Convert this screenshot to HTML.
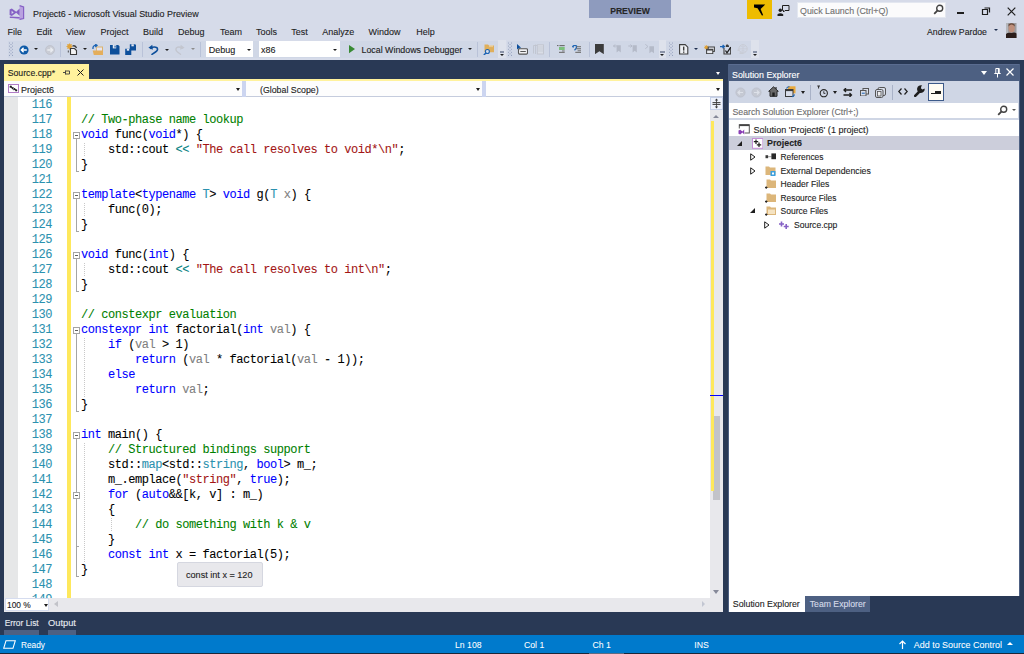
<!DOCTYPE html><html><head><meta charset="utf-8"><style>
*{margin:0;padding:0;box-sizing:border-box}
html,body{width:1024px;height:654px;overflow:hidden;background:#293955;font-family:"Liberation Sans",sans-serif;font-size:9px;color:#1E1E1E}
.a{position:absolute}
.t{position:absolute;white-space:pre;line-height:12px;height:12px;-webkit-text-stroke:0.12px currentColor}
.menu span{position:absolute;top:25.5px;line-height:12px;font-size:9px;-webkit-text-stroke:0.1px currentColor}
.sep{position:absolute;width:1px;top:42px;height:15px;background:#B9C2D8}
.dd{position:absolute;width:0;height:0;border-left:2.5px solid transparent;border-right:2.5px solid transparent;border-top:3px solid #1E1E1E}
.grip{position:absolute;top:42px;width:4px;height:14px;background-image:radial-gradient(circle,#99A4BF 0.75px,transparent 0.9px);background-size:2px 2px}
.code{font-family:"Liberation Mono",monospace;font-size:12px;letter-spacing:-0.45px;-webkit-text-stroke:0.08px currentColor}
.ln{position:absolute;left:18px;width:34px;text-align:right;color:#2B91AF;white-space:pre;height:15px;line-height:15px}
.cl{position:absolute;left:81px;white-space:pre;height:15px;line-height:15px;color:#000}
.k{color:#0000FF}.c{color:#008000}.s{color:#A31515}.ty{color:#2B91AF}.p{color:#808080}.op{color:#008080}
.tree{position:absolute;white-space:pre;line-height:13px;height:13px;font-size:9px;-webkit-text-stroke:0.12px currentColor}
</style></head><body>
<div class="a" style="left:0px;top:0px;width:1024px;height:60px;background:#D6DBE9;"></div>
<svg class="a" style="left:9px;top:5px" width="16" height="15" viewBox="0 0 16 15"><path d="M10.6 0.6 L14.6 2 V13.6 L10.6 14.4 L0.8 12.2 L10.6 12.4 Z" fill="#B9A2E0"/><path d="M10.6 0.6 L14.6 2 V13.6 L10.6 14.4" fill="none" stroke="#8661C5" stroke-width="1.2"/><path d="M0.8 12.2 L10.6 12.6" stroke="#8661C5" stroke-width="1.4"/><path d="M0.6 4.4 L2.8 3.5 L7.2 6.8 L10.6 3.6 V10.8 L7.2 7.8 L2.8 11 L0.6 10.1 Z M2.6 5.8 V9 L4.7 7.4 Z" fill="#8661C5" fill-rule="evenodd"/></svg>
<div class="t" style="left:33px;top:7.5px;font-size:8.95px">Project6 - Microsoft Visual Studio Preview</div>
<div class="a" style="left:589px;top:0px;width:82px;height:18px;background:#8E9BBE;"></div>
<div class="t" style="left:589px;top:5px;width:82px;text-align:center;font-weight:bold;font-size:8.6px;color:#262626;transform:scaleY(1.12)">PREVIEW</div>
<div class="a" style="left:747px;top:0px;width:25px;height:19px;background:#EEBC00;"></div>
<svg class="a" style="left:753px;top:4px" width="13" height="12" viewBox="0 0 13 12"><path d="M1 0.6 H12.2 L7.6 5 L10.2 11.3 L8.9 11.6 L4.6 4.2 L1 3.6 Z" fill="#000"/></svg>
<svg class="a" style="left:777px;top:4px" width="13" height="12" viewBox="0 0 13 12"><path d="M5.5 1.5 H12 V6.5 H8 L6.5 8 V6.5 H5.5 Z" fill="none" stroke="#1E1E1E" stroke-width="1"/><circle cx="3.3" cy="6.2" r="1.7" fill="#1E1E1E"/><path d="M0.5 12 V10.3 Q3.3 8 6.2 10.3 V12Z" fill="#1E1E1E"/></svg>
<div class="a" style="left:797px;top:2px;width:149px;height:16px;background:#FBFBFC;border:1px solid #E3E7F0"></div>
<div class="t" style="left:800px;top:5px;color:#717171;font-size:8.85px">Quick Launch (Ctrl+Q)</div>
<svg class="a" style="left:933px;top:4px" width="11" height="11" viewBox="0 0 11 11"><circle cx="6.7" cy="4.3" r="3" fill="none" stroke="#424242" stroke-width="1.4"/><path d="M4.6 6.4 L1.2 9.8" stroke="#424242" stroke-width="1.8"/></svg>
<div class="a" style="left:957px;top:12px;width:7px;height:2px;background:#1E1E1E;"></div>
<svg class="a" style="left:981px;top:6px" width="10" height="10" viewBox="0 0 10 10"><path d="M3.5 2 H8.5 V6.5 M1.5 3.5 H6.5 V8.5 H1.5 Z" fill="none" stroke="#1E1E1E" stroke-width="1.2"/></svg>
<svg class="a" style="left:1007px;top:7px" width="9" height="9" viewBox="0 0 9 9"><path d="M0.7 0.7 L8.3 8.3 M8.3 0.7 L0.7 8.3" stroke="#1E1E1E" stroke-width="1.2"/></svg>
<div class="t" style="left:927px;top:26px;font-size:8.7px">Andrew Pardoe</div>
<div class="dd" style="left:993.5px;top:29px;border-left-width:2.2px;border-right-width:2.2px;border-top:2.8px solid #1E2E4E"></div>
<svg class="a" style="left:1006px;top:23px" width="10.5" height="15" viewBox="0 0 10.5 15"><rect width="10.5" height="15" fill="#9C9CA0"/><rect x="0" y="0" width="2" height="15" fill="#B5B7BC"/><ellipse cx="5.6" cy="5.2" rx="3.1" ry="4.2" fill="#BE8F7C"/><path d="M2.5 3.5 Q5.5 -0.5 8.7 3.5 V1.5 Q5.5 -1 2.5 1.5 Z" fill="#6A4A3A"/><path d="M0 15 V11 Q2 9 5.5 10 Q9 9 10.5 10.5 V15 Z" fill="#2A1C1A"/></svg>
<div class="menu">
<span style="left:7.5px">File</span>
<span style="left:36.5px">Edit</span>
<span style="left:66px">View</span>
<span style="left:100.5px">Project</span>
<span style="left:143px">Build</span>
<span style="left:178px">Debug</span>
<span style="left:220px">Team</span>
<span style="left:256px">Tools</span>
<span style="left:291.3px">Test</span>
<span style="left:322.3px">Analyze</span>
<span style="left:368.4px">Window</span>
<span style="left:416.2px">Help</span>
</div>
<div class="a" style="left:8px;top:40.5px;width:490px;height:17.5px;background:#D0D7E6;"></div>
<div class="a" style="left:506.5px;top:40.5px;width:152.5px;height:17.5px;background:#D0D7E6;"></div>
<div class="a" style="left:666.4px;top:40.5px;width:84.4px;height:17.5px;background:#D0D7E6;"></div>
<div class="a" style="left:497.7px;top:40px;width:8.8px;height:18px;background:#DEE2EC;"></div>
<div class="a" style="left:499.79999999999995px;top:51px;width:4.6px;height:1.5px;background:#8A93A8;"></div>
<div class="a" style="left:499.79999999999995px;top:53.8px;width:0;height:0;border-left:2.3px solid transparent;border-right:2.3px solid transparent;border-top:2.2px solid #1E1E1E"></div>
<div class="a" style="left:658.9px;top:40px;width:7.5px;height:18px;background:#DEE2EC;"></div>
<div class="a" style="left:660.35px;top:51px;width:4.6px;height:1.5px;background:#8A93A8;"></div>
<div class="a" style="left:660.35px;top:53.8px;width:0;height:0;border-left:2.3px solid transparent;border-right:2.3px solid transparent;border-top:2.2px solid #1E1E1E"></div>
<div class="a" style="left:750.8px;top:40px;width:8.7px;height:18px;background:#DEE2EC;"></div>
<div class="a" style="left:752.85px;top:51px;width:4.6px;height:1.5px;background:#8A93A8;"></div>
<div class="a" style="left:752.85px;top:53.8px;width:0;height:0;border-left:2.3px solid transparent;border-right:2.3px solid transparent;border-top:2.2px solid #1E1E1E"></div>
<svg class="a" style="left:8.5px;top:42px" width="4" height="14" viewBox="0 0 4 14"><g fill="#8D99B8"><circle cx="0.4" cy="1.0" r="0.55"/><circle cx="3.6" cy="1.0" r="0.55"/><circle cx="2.0" cy="2.549999999999997" r="0.55"/><circle cx="0.4" cy="4.100000000000001" r="0.55"/><circle cx="3.6" cy="4.100000000000001" r="0.55"/><circle cx="2.0" cy="5.649999999999999" r="0.55"/><circle cx="0.4" cy="7.200000000000003" r="0.55"/><circle cx="3.6" cy="7.200000000000003" r="0.55"/><circle cx="2.0" cy="8.75" r="0.55"/><circle cx="0.4" cy="10.299999999999997" r="0.55"/><circle cx="3.6" cy="10.299999999999997" r="0.55"/><circle cx="2.0" cy="11.850000000000001" r="0.55"/><circle cx="0.4" cy="13.399999999999999" r="0.55"/><circle cx="3.6" cy="13.399999999999999" r="0.55"/></g></svg>
<svg class="a" style="left:508px;top:42px" width="4" height="14" viewBox="0 0 4 14"><g fill="#8D99B8"><circle cx="0.4" cy="1.0" r="0.55"/><circle cx="3.6" cy="1.0" r="0.55"/><circle cx="2.0" cy="2.549999999999997" r="0.55"/><circle cx="0.4" cy="4.100000000000001" r="0.55"/><circle cx="3.6" cy="4.100000000000001" r="0.55"/><circle cx="2.0" cy="5.649999999999999" r="0.55"/><circle cx="0.4" cy="7.200000000000003" r="0.55"/><circle cx="3.6" cy="7.200000000000003" r="0.55"/><circle cx="2.0" cy="8.75" r="0.55"/><circle cx="0.4" cy="10.299999999999997" r="0.55"/><circle cx="3.6" cy="10.299999999999997" r="0.55"/><circle cx="2.0" cy="11.850000000000001" r="0.55"/><circle cx="0.4" cy="13.399999999999999" r="0.55"/><circle cx="3.6" cy="13.399999999999999" r="0.55"/></g></svg>
<svg class="a" style="left:669px;top:42px" width="4" height="14" viewBox="0 0 4 14"><g fill="#8D99B8"><circle cx="0.4" cy="1.0" r="0.55"/><circle cx="3.6" cy="1.0" r="0.55"/><circle cx="2.0" cy="2.549999999999997" r="0.55"/><circle cx="0.4" cy="4.100000000000001" r="0.55"/><circle cx="3.6" cy="4.100000000000001" r="0.55"/><circle cx="2.0" cy="5.649999999999999" r="0.55"/><circle cx="0.4" cy="7.200000000000003" r="0.55"/><circle cx="3.6" cy="7.200000000000003" r="0.55"/><circle cx="2.0" cy="8.75" r="0.55"/><circle cx="0.4" cy="10.299999999999997" r="0.55"/><circle cx="3.6" cy="10.299999999999997" r="0.55"/><circle cx="2.0" cy="11.850000000000001" r="0.55"/><circle cx="0.4" cy="13.399999999999999" r="0.55"/><circle cx="3.6" cy="13.399999999999999" r="0.55"/></g></svg>
<svg class="a" style="left:18.5px;top:44.5px" width="10" height="10" viewBox="0 0 10 10"><circle cx="5" cy="5" r="4.6" fill="#0E5AA7"/><path d="M2.3 5 H7.8 M4.6 2.7 L2.3 5 L4.6 7.3" fill="none" stroke="#fff" stroke-width="1.4"/></svg>
<div class="dd" style="left:34px;top:48px;border-left-width:2.2px;border-right-width:2.2px;border-top:2.4px solid #1E1E1E"></div>
<svg class="a" style="left:44.5px;top:44.5px" width="10" height="10" viewBox="0 0 10 10"><circle cx="5" cy="5" r="4.5" fill="#C9CCD5" stroke="#BEC2CC" stroke-width="0.8"/><path d="M2.3 5 H7.7 M5.4 2.7 L7.7 5 L5.4 7.3" fill="none" stroke="#E9EBF0" stroke-width="1.3"/></svg>
<div class="dd" style="left:190.9px;top:48.3px;border-left-width:2.1px;border-right-width:2.1px;border-top:2.3px solid #8C8C8C"></div>
<div class="sep" style="left:59.5px"></div>
<svg class="a" style="left:66px;top:43px" width="12" height="13" viewBox="0 0 12 13"><circle cx="3.5" cy="3.5" r="2.4" fill="#E0A43C"/><path d="M3.5 0.3 V6.7 M0.3 3.5 H6.7 M1.2 1.2 L5.8 5.8 M5.8 1.2 L1.2 5.8" stroke="#E0A43C" stroke-width="0.7"/><path d="M4.5 5.5 H8.5 L10.5 7.5 V11.5 H4.5 Z" fill="#F3F3F3" stroke="#3A3A3A" stroke-width="1.1"/><path d="M6.5 3 Q9.5 2 10.5 5" fill="none" stroke="#3A3A3A" stroke-width="1.3"/><path d="M2.3 7.5 V9.5" stroke="#3A3A3A" stroke-width="0.9"/></svg>
<div class="dd" style="left:82.8px;top:48px;border-left-width:2.2px;border-right-width:2.2px;border-top:2.4px solid #1E1E1E"></div>
<svg class="a" style="left:92px;top:43.5px" width="12" height="12" viewBox="0 0 12 12"><path d="M4.2 2.5 H11 V11 H4.2 Z" fill="#DCB26A"/><path d="M5 3.5 H10 V9 H5Z" fill="#E8E5EE"/><path d="M0.7 6.5 H11 V11 H1.8 Z" fill="#E4AE5C"/><path d="M1 5 Q0.5 1.5 4 1.2 M3 0 L5 1.3 L3.3 3" fill="none" stroke="#1C64B4" stroke-width="1.3"/></svg>
<svg class="a" style="left:109.5px;top:44.5px" width="10" height="10" viewBox="0 0 10 10"><path d="M0 0 H8.2 L9.5 1.3 V9.5 H0 Z" fill="#0D4F9B"/><rect x="2.8" y="0" width="3.4" height="3.4" fill="#E6EAF2"/><rect x="4.5" y="0.6" width="1.1" height="2" fill="#0D4F9B"/></svg>
<svg class="a" style="left:125px;top:43.5px" width="12" height="11.5" viewBox="0 0 12 11.5"><path d="M4.8 0.3 H10.2 L11 1.1 V6.5 H4.8 Z" fill="#0D4F9B"/><rect x="6.4" y="0.3" width="2.4" height="2" fill="#E6EAF2"/><path d="M0.2 4.7 H5.4 L6.3 5.6 V11.2 H0.2 Z" fill="#0D4F9B"/><rect x="1.8" y="4.7" width="2.4" height="2" fill="#E6EAF2"/></svg>
<div class="sep" style="left:141.5px"></div>
<svg class="a" style="left:148px;top:44px" width="11" height="11" viewBox="0 0 11 11"><path d="M2.8 4.3 Q6 2 9 3.8 Q10.5 6 7.5 8 L4 10.3" fill="none" stroke="#0D4F9B" stroke-width="1.6" stroke-linecap="round"/><path d="M0.4 3.8 L4.3 0.8 L4.8 5.8 Z" fill="#0D4F9B"/></svg>
<div class="dd" style="left:164.5px;top:48.5px;border-left-width:2.2px;border-right-width:2.2px;border-top:2.3px solid #1E1E1E"></div>
<svg class="a" style="left:175px;top:44px" width="10" height="11" viewBox="0 0 10 11"><path d="M7.2 4.3 Q4 2 1.5 3.8 Q0 6 2.5 8 L5.5 10.3" fill="none" stroke="#C3C6CF" stroke-width="1.4" stroke-linecap="round"/><path d="M9.6 3.8 L5.7 0.8 L5.2 5.8 Z" fill="#C3C6CF"/></svg>
<div class="sep" style="left:199.5px"></div>
<div class="a" style="left:206px;top:41px;width:47px;height:16px;background:#FFFFFF;"></div>
<div class="t" style="left:208.7px;top:44px;font-size:9px">Debug</div>
<div class="dd" style="left:246.5px;top:48.5px;border-left-width:2.3px;border-right-width:2.3px;border-top:2.5px solid #1E1E1E"></div>
<div class="a" style="left:259px;top:41px;width:81px;height:16px;background:#FFFFFF;"></div>
<div class="t" style="left:261px;top:44px;font-size:9px">x86</div>
<div class="dd" style="left:332.8px;top:48.5px;border-left-width:2.3px;border-right-width:2.3px;border-top:2.5px solid #1E1E1E"></div>
<svg class="a" style="left:349.3px;top:45.4px" width="6" height="8.2" viewBox="0 0 6 8.2"><path d="M0 0 L6 4.1 L0 8.2 Z" fill="#388A34"/></svg>
<div class="t" style="left:361.5px;top:44px;font-size:8.86px">Local Windows Debugger</div>
<div class="dd" style="left:467.5px;top:48.3px;border-left-width:2.3px;border-right-width:2.3px;border-top:2.5px solid #1E1E1E"></div>
<div class="sep" style="left:476.5px"></div>
<svg class="a" style="left:483px;top:43.5px" width="12" height="11.5" viewBox="0 0 12 11.5"><path d="M1.5 0.5 H5 L6 1.5 H11 V8.2 H1.5 Z" fill="#DFAF5C"/><path d="M6 1.6 H10 M6 2.6 H10" stroke="#F2DDB8" stroke-width="0.6"/><circle cx="4.4" cy="7.5" r="2" fill="#D7DDE9" stroke="#1C64B4" stroke-width="1.1"/><path d="M3 9 L0.8 11" stroke="#1C64B4" stroke-width="1.5"/></svg>
<svg class="a" style="left:517px;top:44px" width="11" height="10.5" viewBox="0 0 11 10.5"><path d="M0 0 V5.5 L1.4 4.2 L2.6 6.5 L3.4 6 L2.3 3.8 H4.2 Z" fill="#0D4F9B"/><rect x="1.5" y="4.8" width="9" height="5.3" rx="1" fill="#F2F2F4" stroke="#555" stroke-width="1.1"/><rect x="3.3" y="7" width="5.5" height="1" fill="#555"/></svg>
<svg class="a" style="left:533px;top:44px" width="11" height="10.5" viewBox="0 0 11 10.5"><path d="M0.5 1.5 V9.5 M0.5 1.5 H4 M2.5 0.5 V10" stroke="#C0C4CE" stroke-width="0.9" fill="none"/><rect x="4.3" y="0.8" width="6.2" height="9.2" fill="#D9DDE6" stroke="#C0C4CE" stroke-width="0.9"/><path d="M5 3 H10 M5 5 H10 M5 7 H10" stroke="#C0C4CE" stroke-width="0.7"/></svg>
<div class="sep" style="left:549px"></div>
<svg class="a" style="left:557px;top:45px" width="8" height="8" viewBox="0 0 8 8"><rect x="0" y="0" width="1.5" height="1.1" fill="#6E6E6E"/><rect x="2.4" y="0" width="5.3" height="1.2" fill="#6E6E6E"/><rect x="2" y="2" width="5.7" height="3" fill="#7CC07C"/><rect x="5" y="5.5" width="2.7" height="0.9" fill="#6E6E6E"/><rect x="2" y="6.8" width="5.7" height="1.1" fill="#6E6E6E"/></svg>
<svg class="a" style="left:572px;top:45px" width="9.5" height="8" viewBox="0 0 9.5 8"><path d="M0.8 1.5 Q2.5 -0.5 4.5 1 Q5 3 2.5 5.2" fill="none" stroke="#1C64B4" stroke-width="1.3"/><path d="M0.5 1 L1.5 2.5" stroke="#1C64B4" stroke-width="1.3"/><rect x="4.3" y="1.2" width="4.7" height="1" fill="#6E6E6E"/><rect x="4.3" y="3.2" width="4.7" height="1.1" fill="#6E6E6E"/><rect x="5.6" y="5.3" width="3.4" height="0.9" fill="#6E6E6E"/><rect x="3.3" y="6.8" width="5.7" height="1.1" fill="#6E6E6E"/></svg>
<div class="sep" style="left:588.5px"></div>
<svg class="a" style="left:595px;top:43.8px" width="9" height="10.4" viewBox="0 0 9 10.4"><path d="M0 0 H8.8 V10.2 L4.4 7.2 L0 10.2 Z" fill="#3B3B3B"/></svg>
<svg class="a" style="left:612.9px;top:44.4px" width="8" height="8.6" viewBox="0 0 8 8.6"><path d="M0.5 2 H3.8 M2 0.5 L0.5 2 L2 3.5" fill="none" stroke="#B4BAC8" stroke-width="1"/><path d="M3.6 1.2 H7.8 V8.5 L5.7 6.8 L3.6 8.5 Z" fill="#B4BAC8"/></svg>
<svg class="a" style="left:628.4px;top:44.4px" width="9" height="8.6" viewBox="0 0 9 8.6"><path d="M0.3 2 H4 M2.5 0.5 L4 2 L2.5 3.5" fill="none" stroke="#B4BAC8" stroke-width="1"/><path d="M4.6 1.2 H8.8 V8.5 L6.7 6.8 L4.6 8.5 Z" fill="#B4BAC8"/></svg>
<svg class="a" style="left:644.8px;top:44px" width="9.2" height="9.5" viewBox="0 0 9.2 9.5"><path d="M0.3 0.3 L3 2.5 L0.3 4.7" fill="none" stroke="#B4BAC8" stroke-width="0.9"/><path d="M4.4 2.2 H9 V9.3 L6.7 7.5 L4.4 9.3 Z" fill="#B4BAC8"/></svg>
<svg class="a" style="left:679.2px;top:44px" width="9.4" height="10.6" viewBox="0 0 9.4 10.6"><path d="M0.6 0.6 H6.2 L8.8 3.2 V10 H0.6 Z" fill="#EEF0F4" stroke="#3E3E3E" stroke-width="1.1"/><rect x="4" y="2.6" width="1.4" height="4" fill="#3E3E3E"/><rect x="4" y="7.5" width="1.4" height="1.3" fill="#3E3E3E"/></svg>
<div class="dd" style="left:694.2px;top:48px;border-left-width:2.2px;border-right-width:2.2px;border-top:2.5px solid #1E2E4E"></div>
<svg class="a" style="left:704.3px;top:44.6px" width="11" height="9.2" viewBox="0 0 11 9.2"><circle cx="2.4" cy="2.4" r="1.8" fill="#E0A43C"/><path d="M2.4 0 V4.8 M0 2.4 H4.8 M0.7 0.7 L4.1 4.1 M4.1 0.7 L0.7 4.1" stroke="#E0A43C" stroke-width="0.6"/><rect x="4.2" y="2" width="6.2" height="4.4" fill="#E8EAF0" stroke="#3E3E3E" stroke-width="1"/><rect x="2.6" y="4.3" width="6.2" height="4.4" fill="#E8EAF0" stroke="#3E3E3E" stroke-width="1"/><rect x="2.6" y="4.3" width="6.2" height="1.2" fill="#3E3E3E"/></svg>
<svg class="a" style="left:720px;top:44px" width="11.2" height="10.6" viewBox="0 0 11.2 10.6"><path d="M0 2.6 H4.3 M2.6 0.9 L4.4 2.6 L2.6 4.3" fill="none" stroke="#1C64B4" stroke-width="1.4"/><path d="M6.5 0.5 H8 L8.5 1.5 H9 V3 H5.8 V1.5 Z" fill="#3E3E3E"/><path d="M4 4 V10 H10.7 V3.5" fill="none" stroke="#3E3E3E" stroke-width="1.1"/><path d="M5.5 6.5 L7 8.8 L10.8 3.2" fill="none" stroke="#1E1E1E" stroke-width="1.3"/></svg>
<svg class="a" style="left:736.8px;top:44px" width="11" height="10.5" viewBox="0 0 11 10.5"><circle cx="6" cy="4.8" r="4.2" fill="none" stroke="#C8CCD5" stroke-width="0.9"/><path d="M6 0.6 V9 M1.8 4.8 H10.2 M3.3 2 Q6 4 8.7 2 M3.3 7.6 Q6 5.6 8.7 7.6" fill="none" stroke="#C8CCD5" stroke-width="0.7"/><rect x="0.5" y="5.5" width="2" height="1.5" fill="#C8CCD5"/><rect x="2.5" y="8.5" width="4" height="1.5" fill="#C8CCD5"/></svg>
<div class="a" style="left:4px;top:64px;width:85px;height:16px;background:#FFF29D;"></div>
<div class="t" style="left:7.7px;top:66.8px;font-size:8.7px">Source.cpp*</div>
<svg class="a" style="left:63px;top:70px" width="7" height="5" viewBox="0 0 7 5"><path d="M0 2.5 H2.5 M2.5 0.5 V4.5 M2.5 1 H6.5 V4 H2.5" fill="none" stroke="#3A3A3A" stroke-width="0.9"/></svg>
<svg class="a" style="left:77px;top:69px" width="7" height="7" viewBox="0 0 7 7"><path d="M0.5 0.5 L6.5 6.5 M6.5 0.5 L0.5 6.5" stroke="#1E1E1E" stroke-width="1"/></svg>
<div class="a" style="left:4px;top:79px;width:719px;height:2px;background:#FFF29D;"></div>
<div class="dd" style="left:715.5px;top:71.5px;border-left-width:2.75px;border-right-width:2.75px;border-top:3.2px solid #FFFFFF"></div>
<div class="a" style="left:4px;top:81px;width:719px;height:16px;background:#FDFDFD;border-bottom:1.5px solid #C5CCDD"></div>
<svg class="a" style="left:8px;top:84px" width="11" height="9" viewBox="0 0 11 9"><rect x="0.5" y="0.5" width="10" height="8" fill="#fff" stroke="#B07CC6" stroke-width="1"/><path d="M2 2 L5 4.5 M6 4.5 L9 7" stroke="#1E1E1E" stroke-width="1.2"/><path d="M1.8 3.5 L3.5 1.8 M4 5 L5.5 3.5 M5.5 6 L7 4.5 M7.5 7.2 L9 5.7" stroke="#1E1E1E" stroke-width="1.1"/></svg>
<div class="t" style="left:21px;top:84px;font-size:9px">Project6</div>
<div class="dd" style="left:236px;top:88px;border-left-width:2.5px;border-right-width:2.5px;border-top:3px solid #1E1E1E"></div>
<div class="a" style="left:242px;top:81px;width:4px;height:16px;background:#CCD5F0;"></div>
<div class="t" style="left:260px;top:84px;font-size:8.8px">(Global Scope)</div>
<div class="dd" style="left:476px;top:88px;border-left-width:2.5px;border-right-width:2.5px;border-top:3px solid #1E1E1E"></div>
<div class="a" style="left:482px;top:81px;width:4px;height:16px;background:#CCD5F0;"></div>
<div class="dd" style="left:715.5px;top:88px;border-left-width:2.5px;border-right-width:2.5px;border-top:3px solid #1E1E1E"></div>
<div class="a" style="left:4px;top:97px;width:706px;height:501px;background:#FFFFFF;"></div>
<div class="a" style="left:4px;top:97px;width:14px;height:501px;background:#E6E7E8;"></div>
<div class="a" style="left:67px;top:97px;width:3.6px;height:501px;background:#FEE85C;"></div>
<div class="a code" style="left:0;top:0;width:710px;height:598px;overflow:hidden">
<div class="ln" style="top:98.0px">116</div>
<div class="ln" style="top:113.0px">117</div>
<div class="cl" style="top:113.0px"><span class="c">// Two-phase name lookup</span></div>
<div class="ln" style="top:128.0px">118</div>
<div class="cl" style="top:128.0px"><span class="k">void</span> func(<span class="k">void</span>*) {</div>
<div class="ln" style="top:143.0px">119</div>
<div class="cl" style="top:143.0px">    std::cout <span class="op">&lt;&lt;</span> <span class="s">"The call resolves to void*\n"</span>;</div>
<div class="ln" style="top:158.0px">120</div>
<div class="cl" style="top:158.0px">}</div>
<div class="ln" style="top:173.0px">121</div>
<div class="ln" style="top:188.0px">122</div>
<div class="cl" style="top:188.0px"><span class="k">template</span>&lt;<span class="k">typename</span> <span class="ty">T</span>&gt; <span class="k">void</span> g(<span class="ty">T</span> <span class="p">x</span>) {</div>
<div class="ln" style="top:203.0px">123</div>
<div class="cl" style="top:203.0px">    func(0);</div>
<div class="ln" style="top:218.0px">124</div>
<div class="cl" style="top:218.0px">}</div>
<div class="ln" style="top:233.0px">125</div>
<div class="ln" style="top:248.0px">126</div>
<div class="cl" style="top:248.0px"><span class="k">void</span> func(<span class="k">int</span>) {</div>
<div class="ln" style="top:263.0px">127</div>
<div class="cl" style="top:263.0px">    std::cout <span class="op">&lt;&lt;</span> <span class="s">"The call resolves to int\n"</span>;</div>
<div class="ln" style="top:278.0px">128</div>
<div class="cl" style="top:278.0px">}</div>
<div class="ln" style="top:293.0px">129</div>
<div class="ln" style="top:308.0px">130</div>
<div class="cl" style="top:308.0px"><span class="c">// constexpr evaluation</span></div>
<div class="ln" style="top:323.0px">131</div>
<div class="cl" style="top:323.0px"><span class="k">constexpr</span> <span class="k">int</span> factorial(<span class="k">int</span> <span class="p">val</span>) {</div>
<div class="ln" style="top:338.0px">132</div>
<div class="cl" style="top:338.0px">    <span class="k">if</span> (<span class="p">val</span> &gt; 1)</div>
<div class="ln" style="top:353.0px">133</div>
<div class="cl" style="top:353.0px">        <span class="k">return</span> (<span class="p">val</span> * factorial(<span class="p">val</span> - 1));</div>
<div class="ln" style="top:368.0px">134</div>
<div class="cl" style="top:368.0px">    <span class="k">else</span></div>
<div class="ln" style="top:383.0px">135</div>
<div class="cl" style="top:383.0px">        <span class="k">return</span> <span class="p">val</span>;</div>
<div class="ln" style="top:398.0px">136</div>
<div class="cl" style="top:398.0px">}</div>
<div class="ln" style="top:413.0px">137</div>
<div class="ln" style="top:428.0px">138</div>
<div class="cl" style="top:428.0px"><span class="k">int</span> main() {</div>
<div class="ln" style="top:443.0px">139</div>
<div class="cl" style="top:443.0px">    <span class="c">// Structured bindings support</span></div>
<div class="ln" style="top:458.0px">140</div>
<div class="cl" style="top:458.0px">    std::<span class="ty">map</span>&lt;std::<span class="ty">string</span>, <span class="k">bool</span>&gt; m_;</div>
<div class="ln" style="top:473.0px">141</div>
<div class="cl" style="top:473.0px">    m_.emplace(<span class="s">"string"</span>, <span class="k">true</span>);</div>
<div class="ln" style="top:488.0px">142</div>
<div class="cl" style="top:488.0px">    <span class="k">for</span> (<span class="k">auto</span>&amp;&amp;[k, v] : m_)</div>
<div class="ln" style="top:503.0px">143</div>
<div class="cl" style="top:503.0px">    {</div>
<div class="ln" style="top:518.0px">144</div>
<div class="cl" style="top:518.0px">        <span class="c">// do something with k &amp; v</span></div>
<div class="ln" style="top:533.0px">145</div>
<div class="cl" style="top:533.0px">    }</div>
<div class="ln" style="top:548.0px">146</div>
<div class="cl" style="top:548.0px">    <span class="k">const</span> <span class="k">int</span> x = factorial(5);</div>
<div class="ln" style="top:563.0px">147</div>
<div class="cl" style="top:563.0px">}</div>
<div class="ln" style="top:578.0px">148</div>
<div class="ln" style="top:593.0px">149</div>
</div>
<div class="a" style="left:72.5px;top:131.5px;width:7px;height:7px;border:1px solid #A5A5A5;background:#fff"></div>
<div class="a" style="left:74.5px;top:134.5px;width:3px;height:1px;background:#606060"></div>
<div class="a" style="left:76px;top:138.5px;width:1px;height:32.5px;background:#A5A5A5"></div>
<div class="a" style="left:76px;top:171px;width:3px;height:1px;background:#A5A5A5"></div>
<div class="a" style="left:72.5px;top:191.5px;width:7px;height:7px;border:1px solid #A5A5A5;background:#fff"></div>
<div class="a" style="left:74.5px;top:194.5px;width:3px;height:1px;background:#606060"></div>
<div class="a" style="left:76px;top:198.5px;width:1px;height:32.5px;background:#A5A5A5"></div>
<div class="a" style="left:76px;top:231px;width:3px;height:1px;background:#A5A5A5"></div>
<div class="a" style="left:72.5px;top:251.5px;width:7px;height:7px;border:1px solid #A5A5A5;background:#fff"></div>
<div class="a" style="left:74.5px;top:254.5px;width:3px;height:1px;background:#606060"></div>
<div class="a" style="left:76px;top:258.5px;width:1px;height:32.5px;background:#A5A5A5"></div>
<div class="a" style="left:76px;top:291px;width:3px;height:1px;background:#A5A5A5"></div>
<div class="a" style="left:72.5px;top:326.5px;width:7px;height:7px;border:1px solid #A5A5A5;background:#fff"></div>
<div class="a" style="left:74.5px;top:329.5px;width:3px;height:1px;background:#606060"></div>
<div class="a" style="left:76px;top:333.5px;width:1px;height:77.5px;background:#A5A5A5"></div>
<div class="a" style="left:76px;top:411px;width:3px;height:1px;background:#A5A5A5"></div>
<div class="a" style="left:72.5px;top:431.5px;width:7px;height:7px;border:1px solid #A5A5A5;background:#fff"></div>
<div class="a" style="left:74.5px;top:434.5px;width:3px;height:1px;background:#606060"></div>
<div class="a" style="left:76px;top:438.5px;width:1px;height:137.5px;background:#A5A5A5"></div>
<div class="a" style="left:76px;top:576px;width:3px;height:1px;background:#A5A5A5"></div>
<div class="a" style="left:72.5px;top:491.5px;width:7px;height:7px;border:1px solid #A5A5A5;background:#fff"></div>
<div class="a" style="left:74.5px;top:494.5px;width:3px;height:1px;background:#606060"></div>
<div class="a" style="left:76px;top:498.5px;width:1px;height:47.5px;background:#A5A5A5"></div>
<div class="a" style="left:76px;top:546px;width:3px;height:1px;background:#A5A5A5"></div>
<div class="a" style="left:83.5px;top:143px;width:1px;height:14px;background-image:linear-gradient(#C8C8C8 50%,transparent 50%);background-size:1px 2px"></div>
<div class="a" style="left:83.5px;top:203px;width:1px;height:14px;background-image:linear-gradient(#C8C8C8 50%,transparent 50%);background-size:1px 2px"></div>
<div class="a" style="left:83.5px;top:263px;width:1px;height:14px;background-image:linear-gradient(#C8C8C8 50%,transparent 50%);background-size:1px 2px"></div>
<div class="a" style="left:83.5px;top:338px;width:1px;height:59px;background-image:linear-gradient(#C8C8C8 50%,transparent 50%);background-size:1px 2px"></div>
<div class="a" style="left:83.5px;top:443px;width:1px;height:119px;background-image:linear-gradient(#C8C8C8 50%,transparent 50%);background-size:1px 2px"></div>
<div class="a" style="left:110.5px;top:518px;width:1px;height:14px;background-image:linear-gradient(#C8C8C8 50%,transparent 50%);background-size:1px 2px"></div>
<div class="a" style="left:176.5px;top:562px;width:86px;height:25px;background:#E8E8EC;border:1px solid #D5D7E0;border-radius:2px"></div>
<div class="t" style="left:186px;top:569px;font-size:9.1px;color:#1E1E1E">const int x = 120</div>
<div class="a" style="left:710px;top:97px;width:13px;height:501px;background:#E8E8EC;"></div>
<div class="a" style="left:710.4px;top:97px;width:12.5px;height:12.8px;background:#EEF2FC;border:1px solid #C5D0E8"></div>
<svg class="a" style="left:711px;top:98px" width="11" height="11" viewBox="0 0 11 11"><path d="M1.5 4.6 H9.5 M1.5 6.4 H9.5" stroke="#3A3A3A" stroke-width="1"/><path d="M5.5 1.5 V9.5" stroke="#3A3A3A" stroke-width="0.8"/><path d="M3.8 2.6 L5.5 0.6 L7.2 2.6 Z M3.8 8.4 L5.5 10.4 L7.2 8.4 Z" fill="#3A3A3A"/></svg>
<div class="a" style="left:713.1px;top:114.5px;width:0;height:0;border-left:3.2px solid transparent;border-right:3.2px solid transparent;border-bottom:3.7px solid #868999"></div>
<div class="a" style="left:713px;top:416px;width:6.7px;height:84px;background:#C2C3C9;"></div>
<div class="a" style="left:710.7px;top:121px;width:3.3px;height:369.5px;background:#FEE85C;"></div>
<div class="a" style="left:710px;top:394.5px;width:13px;height:1px;background:#0000FF;"></div>
<div class="a" style="left:712.8px;top:589.8px;width:0;height:0;border-left:3.4px solid transparent;border-right:3.4px solid transparent;border-top:4px solid #868999"></div>
<div class="a" style="left:4px;top:598px;width:719px;height:14px;background:#E8E8EC;"></div>
<div class="a" style="left:4.7px;top:598.2px;width:44.5px;height:12.8px;background:#FFFFFF;border:1px solid #D5DCEF"></div>
<div class="t" style="left:7px;top:599px;font-size:8.4px">100 %</div>
<div class="dd" style="left:43.5px;top:604px;border-left-width:2.5px;border-right-width:2.5px;border-top:3px solid #1E1E1E"></div>
<div class="a" style="left:54px;top:601px;width:0;height:0;border-top:3.5px solid transparent;border-bottom:3.5px solid transparent;border-right:4px solid #C2C3C9"></div>
<div class="a" style="left:701.7px;top:601.3px;width:0;height:0;border-top:3.1px solid transparent;border-bottom:3.1px solid transparent;border-left:3.8px solid #C2C6D2"></div>
<div class="a" style="left:727.5px;top:64px;width:292px;height:17px;background:#4D6082;border-top:1px solid #5A6C90"></div>
<div class="t" style="left:732px;top:68.5px;color:#FFFFFF;font-size:8.86px">Solution Explorer</div>
<div class="dd" style="left:980.5px;top:71px;border-left-width:3.5px;border-right-width:3.5px;border-top:4px solid #FFFFFF"></div>
<svg class="a" style="left:994px;top:68px" width="7" height="10" viewBox="0 0 7 10"><path d="M1.8 0.5 H5.2 V5.5 H1.8 Z M0.3 5.5 H6.7 M3.5 5.5 V9.5" fill="none" stroke="#FFFFFF" stroke-width="1"/><rect x="3.8" y="0.5" width="1.4" height="5" fill="#FFFFFF"/></svg>
<svg class="a" style="left:1006px;top:68px" width="8" height="8" viewBox="0 0 8 8"><path d="M0.5 0.5 L7.5 7.5 M7.5 0.5 L0.5 7.5" stroke="#FFFFFF" stroke-width="1.2"/></svg>
<div class="a" style="left:727.5px;top:81px;width:292px;height:39px;background:#CFD6E5;"></div>
<svg class="a" style="left:734.5px;top:86.5px" width="11" height="11" viewBox="0 0 11 11"><circle cx="5.5" cy="5.5" r="4.6" fill="#C5C9D3" stroke="#BBC0CB" stroke-width="0.8"/><path d="M3 5.5 H8 M5 3.5 L3 5.5 L5 7.5" fill="none" stroke="#DDE1E9" stroke-width="1.2"/></svg>
<svg class="a" style="left:751px;top:86.5px" width="11" height="11" viewBox="0 0 11 11"><circle cx="5.5" cy="5.5" r="4.6" fill="#C5C9D3" stroke="#BBC0CB" stroke-width="0.8"/><path d="M3 5.5 H8 M6 3.5 L8 5.5 L6 7.5" fill="none" stroke="#DDE1E9" stroke-width="1.2"/></svg>
<svg class="a" style="left:767.5px;top:86px" width="11" height="11" viewBox="0 0 11 11"><path d="M5.5 0.8 L10.3 5.3 H9 V10.3 H2 V5.3 H0.7 Z" fill="#6A6A6A" stroke="#2A2A2A" stroke-width="1" stroke-linejoin="round"/><rect x="4.3" y="6.5" width="2.4" height="3.8" fill="#1E1E1E"/><path d="M8 1 V3" stroke="#2A2A2A" stroke-width="1.2"/></svg>
<svg class="a" style="left:784.5px;top:86px" width="11" height="11.5" viewBox="0 0 11 11.5"><rect x="3" y="0.3" width="7.5" height="7" fill="#E8A83C"/><rect x="0.5" y="3.5" width="7.5" height="7" fill="#D9DEEA" stroke="#3A3A3A" stroke-width="1"/><rect x="0.5" y="3.5" width="7.5" height="1.6" fill="#3A3A3A"/><path d="M1.5 2.5 Q2.5 0.5 4.5 0.8 M9.5 8.5 Q9 10.5 7 10.8" fill="none" stroke="#1C64B4" stroke-width="1.1"/></svg>
<div class="dd" style="left:800.5px;top:91px;border-left-width:2.5px;border-right-width:2.5px;border-top:3px solid #1E1E1E"></div>
<div class="a" style="left:809.5px;top:85px;width:1px;height:15px;background:#A9B2C7;"></div>
<svg class="a" style="left:817px;top:85px" width="12" height="13" viewBox="0 0 12 13"><circle cx="6.8" cy="8.2" r="3.6" fill="none" stroke="#2A2A2A" stroke-width="1.1"/><path d="M6.8 6.2 V8.4 H8.4" fill="none" stroke="#2A2A2A" stroke-width="0.9"/><path d="M0.3 1 H3 M1.6 1 V3.5" stroke="#2A2A2A" stroke-width="1"/></svg>
<div class="dd" style="left:832.5px;top:91px;border-left-width:2.5px;border-right-width:2.5px;border-top:3px solid #1E1E1E"></div>
<svg class="a" style="left:843px;top:88px" width="9.5" height="9" viewBox="0 0 9.5 9"><path d="M9 2 H1 M3 0 L1 2 L3 4 M0.5 7 H8.5 M6.5 5 L8.5 7 L6.5 9" fill="none" stroke="#1E1E1E" stroke-width="1.3"/></svg>
<svg class="a" style="left:860px;top:87.5px" width="9" height="8.5" viewBox="0 0 9 8.5"><rect x="3" y="0.5" width="5.5" height="5.5" fill="#D9DEEA" stroke="#555" stroke-width="1"/><rect x="0.5" y="2.5" width="5.5" height="5.5" fill="#D9DEEA" stroke="#555" stroke-width="1"/><rect x="1.8" y="4.7" width="3" height="1" fill="#1C64B4"/></svg>
<svg class="a" style="left:875px;top:87px" width="11" height="11" viewBox="0 0 11 11"><rect x="3" y="0.5" width="7.5" height="8" rx="1.5" fill="#D9DEEA" stroke="#555" stroke-width="1"/><rect x="0.5" y="2.5" width="7.5" height="8" rx="1.5" fill="#D9DEEA" stroke="#555" stroke-width="1"/><rect x="2.5" y="4.5" width="3.5" height="4.5" fill="#EEE" stroke="#555" stroke-width="0.8"/></svg>
<div class="a" style="left:891.5px;top:85px;width:1px;height:15px;background:#A9B2C7;"></div>
<svg class="a" style="left:898px;top:88px" width="10" height="7" viewBox="0 0 10 7"><path d="M3.5 0.5 L0.8 3.5 L3.5 6.5 M6.5 0.5 L9.2 3.5 L6.5 6.5" fill="none" stroke="#1E1E1E" stroke-width="1.2"/></svg>
<svg class="a" style="left:914px;top:85px" width="11" height="12" viewBox="0 0 11 12"><path d="M1.2 10.8 L6 6" stroke="#1E1E1E" stroke-width="2.6" stroke-linecap="round"/><path d="M8.2 0.6 A3.8 3.8 0 1 0 10.6 3.4 L8.4 4.6 L6.9 3.3 L7.4 1.2 Z" fill="#1E1E1E"/></svg>
<div class="a" style="left:928px;top:83px;width:16px;height:18px;background:#FFFCF4;border:1px solid #3D5A8A"></div>
<div class="a" style="left:931px;top:92.5px;width:10px;height:1px;background:#1E1E1E;"></div>
<div class="a" style="left:935px;top:90.5px;width:6px;height:2.5px;background:#1E1E1E;"></div>
<div class="a" style="left:729.3px;top:102.8px;width:288.8px;height:15.2px;background:#FFFFFF;"></div>
<div class="t" style="left:732.5px;top:105.5px;color:#6D6D6D;font-size:8.74px">Search Solution Explorer (Ctrl+;)</div>
<svg class="a" style="left:997px;top:105px" width="11" height="11" viewBox="0 0 11 11"><circle cx="6.7" cy="4.3" r="3" fill="none" stroke="#424242" stroke-width="1.4"/><path d="M4.6 6.4 L1.2 9.8" stroke="#424242" stroke-width="1.8"/></svg>
<div class="dd" style="left:1011.7px;top:109.2px;border-left-width:2.1px;border-right-width:2.1px;border-top:2.2px solid #555555"></div>
<div class="a" style="left:727.5px;top:120px;width:292px;height:476px;background:#FFFFFF;"></div>
<div class="a" style="left:727.5px;top:135.5px;width:292px;height:14.5px;background:#CCCEDB;"></div>
<svg class="a" style="left:737.5px;top:124px" width="12" height="11" viewBox="0 0 12 11"><rect x="1.3" y="0.8" width="10" height="8.2" fill="none" stroke="#555" stroke-width="1"/><rect x="1.3" y="0.3" width="10" height="1.8" fill="#444"/><rect x="0" y="4.5" width="6.5" height="6.5" fill="#fff"/><path d="M0.5 6.5 L2.2 5.8 L4.4 7.6 L6.2 5.6 V10.6 L4.4 8.6 L2.2 10.4 L0.5 9.7 Z" fill="#8A3FB5"/></svg>
<div class="tree" style="left:753.5px;top:123.69999999999999px;font-size:9.05px">Solution &#x27;Project6&#x27; (1 project)</div>
<div class="a" style="left:737px;top:141px;width:0;height:0;border-left:5px solid transparent;border-bottom:5px solid #1E1E1E"></div>
<svg class="a" style="left:751.5px;top:137.5px" width="11.5" height="11" viewBox="0 0 11.5 11"><rect x="0.5" y="0.5" width="10.4" height="9.8" fill="#fff" stroke="#C48ED6" stroke-width="1"/><path d="M4 1.5 V6 M1.8 3.7 H6.2 M7 4.5 V9 M4.8 6.8 H9.2" stroke="#1E1E1E" stroke-width="1.2"/></svg>
<div class="tree" style="left:767px;top:136.7px;font-weight:bold;font-size:8.87px">Project6</div>
<svg class="a" style="left:749.5px;top:153px" width="6" height="8" viewBox="0 0 6 8"><path d="M0.7 0.8 L5 4 L0.7 7.2 Z" fill="none" stroke="#1E1E1E" stroke-width="1"/></svg>
<svg class="a" style="left:765px;top:153px" width="11.5" height="7" viewBox="0 0 11.5 7"><rect x="0.5" y="2.2" width="2.6" height="3" fill="#3A3A3A"/><path d="M3 3.7 H6.5" stroke="#888" stroke-width="0.8"/><rect x="6.4" y="0.4" width="4.6" height="5.8" fill="#2A2A2A"/></svg>
<div class="tree" style="left:780.5px;top:151.0px;font-size:8.41px">References</div>
<svg class="a" style="left:749.5px;top:166.8px" width="6" height="8" viewBox="0 0 6 8"><path d="M0.7 0.8 L5 4 L0.7 7.2 Z" fill="none" stroke="#1E1E1E" stroke-width="1"/></svg>
<svg class="a" style="left:765px;top:165px" width="12" height="12" viewBox="0 0 12 12"><path d="M0.5 1.5 H4 L5 2.5 H10.5 V10 H0.5 Z" fill="#DCB67A"/><rect x="5.5" y="6" width="5" height="5" fill="#3BA0E0"/><rect x="7" y="7.5" width="2" height="2" fill="#fff"/></svg>
<div class="tree" style="left:780.5px;top:164.7px;font-size:8.74px">External Dependencies</div>
<svg class="a" style="left:765px;top:178.2px" width="12" height="12" viewBox="0 0 12 12"><path d="M1.5 1.5 H5 L6 2.5 H11 V10 H1.5 Z" fill="#DCB67A"/><path d="M0 9.5 H2.5 M1.2 8.3 V11" stroke="#1E1E1E" stroke-width="0.9"/></svg>
<div class="tree" style="left:780.5px;top:178.2px;font-size:8.6px">Header Files</div>
<svg class="a" style="left:765px;top:191.6px" width="12" height="12" viewBox="0 0 12 12"><path d="M1.5 1.5 H5 L6 2.5 H11 V10 H1.5 Z" fill="#DCB67A"/><path d="M0 9.5 H2.5 M1.2 8.3 V11" stroke="#1E1E1E" stroke-width="0.9"/></svg>
<div class="tree" style="left:780.5px;top:191.5px;font-size:8.4px">Resource Files</div>
<div class="a" style="left:750px;top:208px;width:0;height:0;border-left:5px solid transparent;border-bottom:5px solid #1E1E1E"></div>
<svg class="a" style="left:765px;top:205px" width="12" height="12" viewBox="0 0 12 12"><path d="M1.5 1.5 H5 L6 2.5 H11 V10 H1.5 Z" fill="#DCB67A"/><path d="M0 9.5 H2.5 M1.2 8.3 V11" stroke="#1E1E1E" stroke-width="0.9"/><path d="M3 4.5 H10 V9 H3Z" fill="#F5E3C2"/></svg>
<div class="tree" style="left:780.5px;top:205.0px;font-size:8.55px">Source Files</div>
<svg class="a" style="left:764px;top:221px" width="6" height="8" viewBox="0 0 6 8"><path d="M0.7 0.8 L5 4 L0.7 7.2 Z" fill="none" stroke="#1E1E1E" stroke-width="1"/></svg>
<svg class="a" style="left:779px;top:221px" width="10" height="8" viewBox="0 0 10 8"><path d="M2.5 0.5 V5.5 M0 3 H5 M7.2 3 V8 M4.7 5.5 H9.7" stroke="#8661C5" stroke-width="1.6"/></svg>
<div class="tree" style="left:794px;top:218.8px;font-size:8.58px">Source.cpp</div>
<div class="a" style="left:727.5px;top:596px;width:77px;height:15.5px;background:#FFFFFF;"></div>
<div class="a" style="left:727.5px;top:64px;width:1.3px;height:547.5px;background:#4D6082;"></div>
<div class="a" style="left:1018.9px;top:64px;width:0.9px;height:532px;background:#4D6082;"></div>
<div class="t" style="left:732.8px;top:598.3px;font-size:8.8px">Solution Explorer</div>
<div class="a" style="left:804.5px;top:596px;width:65.5px;height:15.5px;background:#4D6082;"></div>
<div class="t" style="left:809.8px;top:598.3px;color:#D6DBE9;font-size:8.66px">Team Explorer</div>
<div class="t" style="left:4.7px;top:617px;color:#E6E9F0;font-size:8.38px">Error List</div>
<div class="t" style="left:48px;top:617px;color:#E6E9F0;font-size:9.3px">Output</div>
<div class="a" style="left:4.4px;top:630px;width:34.4px;height:5px;background:#4D6082;"></div>
<div class="a" style="left:48px;top:630px;width:28.3px;height:5px;background:#4D6082;"></div>
<div class="a" style="left:0px;top:635px;width:1024px;height:17.5px;background:#007ACC;"></div>
<div class="a" style="left:0px;top:652.5px;width:1024px;height:1.5px;background:#1C2638;"></div>
<div class="a" style="left:589px;top:652.5px;width:35px;height:1.5px;background:#5F6B82;"></div>
<svg class="a" style="left:3px;top:640px" width="13" height="9" viewBox="0 0 13 9"><path d="M3 0.7 H12.3 L10 8.3 H0.7 Z" fill="none" stroke="#FFFFFF" stroke-width="1.1"/></svg>
<div class="t" style="left:21px;top:638.5px;color:#FFFFFF;font-size:8.3px;-webkit-text-stroke:0.05px #fff">Ready</div>
<div class="t" style="left:455px;top:638.5px;color:#FFFFFF;font-size:8.7px;-webkit-text-stroke:0.05px #fff">Ln 108</div>
<div class="t" style="left:524px;top:638.5px;color:#FFFFFF;font-size:8.7px;-webkit-text-stroke:0.05px #fff">Col 1</div>
<div class="t" style="left:592.6px;top:638.5px;color:#FFFFFF;font-size:8.7px;-webkit-text-stroke:0.05px #fff">Ch 1</div>
<div class="t" style="left:694.3px;top:638.5px;color:#FFFFFF;font-size:8.7px;-webkit-text-stroke:0.05px #fff">INS</div>
<div class="t" style="left:913.7px;top:638.5px;color:#FFFFFF;font-size:8.97px;-webkit-text-stroke:0.05px #fff">Add to Source Control</div>
<svg class="a" style="left:899px;top:640px" width="7" height="9" viewBox="0 0 7 9"><path d="M3.5 9 V1 M0.5 4 L3.5 1 L6.5 4" fill="none" stroke="#FFFFFF" stroke-width="1.2"/></svg>
<div class="a" style="left:1007px;top:641.5px;width:0;height:0;border-left:3px solid transparent;border-right:3px solid transparent;border-bottom:3px solid #FFFFFF"></div>
</body></html>
